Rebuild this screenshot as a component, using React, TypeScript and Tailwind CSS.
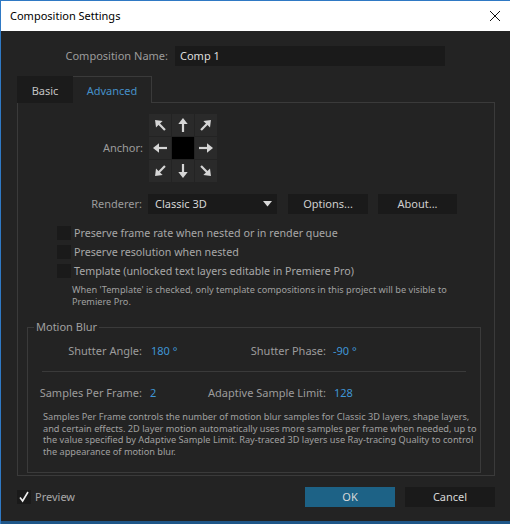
import React from "react";

const font = { fontFamily: '"Noto Sans", "Open Sans", sans-serif' };

function Arrow({ deg }: { deg: number }) {
  return (
    <svg width="22" height="22" viewBox="0 0 22 22">
      <g transform={`rotate(${deg} 11 11)`} fill="#d6d6d6">
        <polygon points="11,4 6.3,10 15.7,10" />
        <rect x="9.9" y="9" width="2.2" height="9" />
      </g>
    </svg>
  );
}

function Cell({ deg }: { deg?: number }) {
  if (deg === undefined) {
    return <div className="w-[22px] h-[22px] bg-black" />;
  }
  return (
    <div className="w-[22px] h-[22px] bg-[#2a2a2a] flex items-center justify-center">
      <Arrow deg={deg} />
    </div>
  );
}

function CheckRow({ label }: { label: string }) {
  return (
    <div className="flex items-center h-[14px] mb-[5px]">
      <div className="w-[14px] h-[14px] bg-[#1a1a1a]" />
      <span className="ml-[3px] text-[10.7px] text-[#a8a8a8] whitespace-nowrap">{label}</span>
    </div>
  );
}

export default function App() {
  return (
    <div
      className="w-[510px] h-[524px] flex flex-col border-t border-l border-[#2f79c4] bg-[#232323] overflow-hidden"
      style={font}
    >
      {/* title bar */}
      <div className="h-[30px] bg-white flex items-center pl-[9px] pr-[9px] shrink-0">
        <span className="text-[11px] text-black">Composition Settings</span>
        <svg className="ml-auto" width="12" height="12" viewBox="0 0 12 12">
          <path d="M1 1 L11 11 M11 1 L1 11" stroke="#111" strokeWidth="1" />
        </svg>
      </div>

      <div className="flex-1 flex flex-col pl-[16px]">
        {/* name */}
        <div className="flex items-center mt-[15px] h-[20px]">
          <span className="w-[151px] text-right text-[11px] text-[#9c9c9c]">Composition Name:</span>
          <div className="ml-[7px] w-[270px] h-[20px] bg-[#1a1a1a] flex items-center pl-[5px] text-[11px] text-[#dedede]">
            Comp 1
          </div>
        </div>

        {/* tabs */}
        <div className="flex mt-[10px] h-[27px] w-[478px]">
          <div className="w-[56px] bg-[#1b1b1b] flex items-center justify-center pt-[3px] text-[11px] text-[#c4c4c4]">
            Basic
          </div>
          <div className="w-[79px] border-t border-r border-[#3a3a3a] flex items-center justify-center pt-[3px] text-[11px] text-[#4590c8]">
            Advanced
          </div>
          <div className="flex-1 border-b border-[#3a3a3a]" />
        </div>

        {/* panel */}
        <div className="w-[478px] h-[373px] border-l border-r border-b border-[#3a3a3a] flex flex-col">
          {/* anchor */}
          <div className="flex items-center mt-[11px]">
            <span className="w-[125px] text-right text-[11px] text-[#9c9c9c]">Anchor:</span>
            <div className="ml-[6px] grid grid-cols-3 gap-px w-[68px]">
              <Cell deg={-45} />
              <Cell deg={0} />
              <Cell deg={45} />
              <Cell deg={-90} />
              <Cell />
              <Cell deg={90} />
              <Cell deg={-135} />
              <Cell deg={180} />
              <Cell deg={135} />
            </div>
          </div>

          {/* renderer */}
          <div className="flex items-center mt-[12px] h-[20px]">
            <span className="w-[124px] text-right text-[11px] text-[#9c9c9c]">Renderer:</span>
            <div className="ml-[6px] w-[129px] h-[20px] bg-[#1a1a1a] flex items-center pl-[7px] pr-[5px] text-[11px] text-[#d6d6d6]">
              Classic 3D
              <svg className="ml-auto" width="9" height="6" viewBox="0 0 9 6">
                <polygon points="0,0 9,0 4.5,5.5" fill="#d8d8d8" />
              </svg>
            </div>
            <div className="ml-[11px] w-[80px] h-[20px] bg-[#1a1a1a] flex items-center justify-center text-[11px] text-[#cfcfcf]">
              Options...
            </div>
            <div className="ml-[10px] w-[79px] h-[20px] bg-[#1a1a1a] flex items-center justify-center text-[11px] text-[#cfcfcf]">
              About...
            </div>
          </div>

          {/* checkboxes */}
          <div className="mt-[12px] pl-[39px] flex flex-col">
            <CheckRow label="Preserve frame rate when nested or in render queue" />
            <CheckRow label="Preserve resolution when nested" />
            <CheckRow label="Template (unlocked text layers editable in Premiere Pro)" />
            <div className="ml-[15px] mt-[1px] text-[9.2px] leading-[12px] text-[#a0a0a0] whitespace-nowrap">
              When 'Template' is checked, only template compositions in this project will be visible to
              <br />
              Premiere Pro.
            </div>
          </div>

          {/* motion blur group */}
          <div className="relative ml-[9px] mt-[19px] w-[454px] h-[146px] border border-[#3a3a3a] flex flex-col">
            <span className="absolute left-[6px] top-[-9px] px-[2px] bg-[#232323] text-[11px] text-[#a0a0a0] leading-[16px]">
              Motion Blur
            </span>
            <div className="flex items-center mt-[15px] h-[16px] text-[11px] whitespace-nowrap">
              <span className="w-[114px] text-right text-[#9c9c9c]">Shutter Angle:</span>
              <span className="ml-[9px] w-[97px] text-[#3f95d5]">180 °</span>
              <span className="w-[78px] text-right text-[#9c9c9c]">Shutter Phase:</span>
              <span className="ml-[7px] text-[#3f95d5]">-90 °</span>
            </div>
            <div className="ml-[14px] mt-[12px] w-[424px] border-t border-[#3a3a3a]" />
            <div className="flex items-center mt-[13px] h-[16px] text-[11px] whitespace-nowrap">
              <span className="w-[114px] text-right text-[#9c9c9c]">Samples Per Frame:</span>
              <span className="ml-[8px] w-[58px] text-[#3f95d5]">2</span>
              <span className="w-[118px] text-right text-[#9c9c9c]">Adaptive Sample Limit:</span>
              <span className="ml-[8px] text-[#3f95d5]">128</span>
            </div>
            <div className="ml-[15px] mt-[10px] text-[9.2px] leading-[11.6px] text-[#a0a0a0] whitespace-nowrap">
              Samples Per Frame controls the number of motion blur samples for Classic 3D layers, shape layers,
              <br />
              and certain effects. 2D layer motion automatically uses more samples per frame when needed, up to
              <br />
              the value specified by Adaptive Sample Limit. Ray-traced 3D layers use Ray-tracing Quality to control
              <br />
              the appearance of motion blur.
            </div>
          </div>
        </div>

        {/* bottom bar */}
        <div className="flex items-center mt-[11px] h-[20px] w-[478px]">
          <div className="w-[14px] h-[14px] bg-[#1a1a1a] flex items-center justify-center">
            <svg width="12" height="12" viewBox="0 0 12 12">
              <path d="M2 6.5 L4.6 10 L10 1" stroke="#f0f0f0" strokeWidth="1.6" fill="none" />
            </svg>
          </div>
          <span className="ml-[4px] text-[11px] text-[#a8a8a8]">Preview</span>
          <div className="ml-auto w-[90px] h-[20px] bg-[#1d6286] flex items-center justify-center text-[11px] text-[#d8d8d8]">
            OK
          </div>
          <div className="ml-[10px] w-[90px] h-[20px] bg-[#1a1a1a] flex items-center justify-center text-[11px] text-[#d8d8d8]">
            Cancel
          </div>
        </div>
      </div>
      <div className="h-[3px] bg-[#1f5688] shrink-0" />
    </div>
  );
}
